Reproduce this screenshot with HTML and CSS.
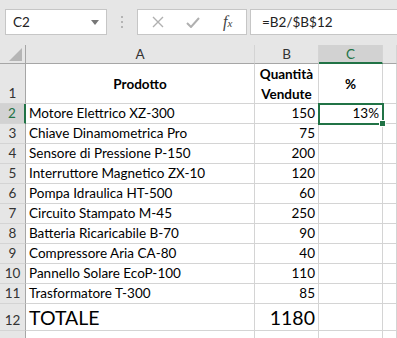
FILE: index.html
```html
<!DOCTYPE html>
<html lang="it">
<head>
    <meta charset="UTF-8">
    <meta name="viewport" content="width=device-width, initial-scale=1.0">
    <title>Foglio vendite</title>
    <link rel="stylesheet" href="styles.css">
</head>
<body>
    <div class="topbar">
        <div class="namebox">
            <span>C2</span>
            <svg class="caret" width="8" height="5" viewBox="0 0 8 5"><path d="M0 0h8L4 5z" fill="#777"/></svg>
        </div>
        <div class="grip">
            <svg width="3" height="13" viewBox="0 0 3 13"><rect x="0" y="0" width="2" height="2" fill="#b4b4b4"/><rect x="0" y="5" width="2" height="2" fill="#b4b4b4"/><rect x="0" y="10" width="2" height="2" fill="#b4b4b4"/></svg>
        </div>
        <div class="fxbox">
            <svg class="ico-x" width="12" height="12" viewBox="0 0 12 12"><path d="M1 1l10 10M11 1L1 11" stroke="#b0b0b0" stroke-width="1.4" fill="none"/></svg>
            <svg class="ico-ok" width="14" height="11" viewBox="0 0 14 11"><path d="M1 6l4 4L13 1" stroke="#b0b0b0" stroke-width="2" fill="none"/></svg>
            <span class="fx">f<small>x</small></span>
        </div>
        <div class="formula">=B2/$B$12</div>
    </div>

    <div class="sheet">
        <!-- header row -->
        <div class="hd corner"><svg width="13" height="13" viewBox="0 0 13 13"><path d="M13 0v13H0z" fill="#b5b5b5"/></svg></div>
        <div class="hd col">A</div>
        <div class="hd col">B</div>
        <div class="hd col sel">C</div>
        <div class="hd col"></div>

        <!-- row 1 -->
        <div class="rh">1</div>
        <div class="c title">Prodotto</div>
        <div class="c title">Quantità<br>Vendute</div>
        <div class="c title">%</div>
        <div class="c"></div>

        <div class="rh sel">2</div>
        <div class="c">Motore Elettrico XZ-300</div>
        <div class="c num">150</div>
        <div class="c num active">13%<span class="handle"></span></div>
        <div class="c"></div>

        <div class="rh">3</div>
        <div class="c">Chiave Dinamometrica Pro</div>
        <div class="c num">75</div>
        <div class="c"></div>
        <div class="c"></div>

        <div class="rh">4</div>
        <div class="c">Sensore di Pressione P-150</div>
        <div class="c num">200</div>
        <div class="c"></div>
        <div class="c"></div>

        <div class="rh">5</div>
        <div class="c">Interruttore Magnetico ZX-10</div>
        <div class="c num">120</div>
        <div class="c"></div>
        <div class="c"></div>

        <div class="rh">6</div>
        <div class="c">Pompa Idraulica HT-500</div>
        <div class="c num">60</div>
        <div class="c"></div>
        <div class="c"></div>

        <div class="rh">7</div>
        <div class="c">Circuito Stampato M-45</div>
        <div class="c num">250</div>
        <div class="c"></div>
        <div class="c"></div>

        <div class="rh">8</div>
        <div class="c">Batteria Ricaricabile B-70</div>
        <div class="c num">90</div>
        <div class="c"></div>
        <div class="c"></div>

        <div class="rh">9</div>
        <div class="c">Compressore Aria CA-80</div>
        <div class="c num">40</div>
        <div class="c"></div>
        <div class="c"></div>

        <div class="rh">10</div>
        <div class="c">Pannello Solare EcoP-100</div>
        <div class="c num">110</div>
        <div class="c"></div>
        <div class="c"></div>

        <div class="rh">11</div>
        <div class="c">Trasformatore T-300</div>
        <div class="c num">85</div>
        <div class="c"></div>
        <div class="c"></div>

        <div class="rh">12</div>
        <div class="c big">TOTALE</div>
        <div class="c num big">1180</div>
        <div class="c"></div>
        <div class="c"></div>

        <div class="rh"></div>
        <div class="c"></div>
        <div class="c"></div>
        <div class="c"></div>
        <div class="c"></div>
    </div>
</body>
</html>
```

FILE: styles.css
```css
body {
    margin: 0;
    background: #e6e6e6;
    font-family: Lato, 'Liberation Sans', sans-serif;
    font-size: 13.5px;
    color: #000;
    overflow: hidden;
}
.topbar {
    height: 45px;
    box-sizing: border-box;
    padding: 9px 0 0 5px;
    display: flex;
    align-items: flex-start;
}
.namebox {
    width: 102px;
    height: 26px;
    box-sizing: border-box;
    background: #fff;
    border: 1px solid #c6c6c6;
    display: flex;
    align-items: center;
    justify-content: space-between;
    padding: 0 7px 0 7px;
    color: #222;
}
.grip {
    width: 30px;
    height: 26px;
    display: flex;
    align-items: center;
    justify-content: center;
}
.fxbox {
    width: 110px;
    height: 26px;
    box-sizing: border-box;
    background: #fff;
    border: 1px solid #c6c6c6;
    display: flex;
    align-items: center;
    padding-left: 14px;
}
.ico-ok {
    margin-left: 22px;
}
.fx {
    margin-left: 23px;
    font-family: 'Liberation Serif', serif;
    font-style: italic;
    font-size: 16px;
    color: #444;
}
.fx small {
    font-size: 11px;
}
.formula {
    flex: 1;
    height: 26px;
    margin-left: 3px;
    margin-right: -5px;
    box-sizing: border-box;
    background: #fff;
    border: 1px solid #c6c6c6;
    padding-left: 11px;
    line-height: 24px;
    color: #222;
}
.sheet {
    display: grid;
    grid-template-columns: 26px 229px 64px 64px 1fr;
    grid-template-rows: 19px 40px repeat(10, 20px) 27px 20px;
    background: #fff;
}
.sheet > div {
    box-sizing: border-box;
    border-right: 1px solid #d4d4d4;
    border-bottom: 1px solid #d4d4d4;
    position: relative;
}
.hd {
    background: #e6e6e6;
    border-bottom-color: #a6a6a6 !important;
    display: flex;
    align-items: center;
    justify-content: center;
    color: #333;
}
.corner {
    border-right-color: #a6a6a6 !important;
    align-items: flex-end;
    justify-content: flex-end;
    padding: 0 3px 2px 0;
}
.hd.sel {
    background: #d2d2d2;
    color: #217346;
    border-bottom: 2px solid #217346 !important;
}
.rh {
    background: #e6e6e6;
    border-right-color: #a6a6a6 !important;
    display: flex;
    align-items: flex-end;
    justify-content: center;
    color: #333;
    line-height: 19px;
}
.rh.sel {
    background: #d2d2d2;
    color: #217346;
    border-right: 2px solid #217346 !important;
}
.c {
    display: flex;
    align-items: flex-end;
    padding: 0 3px;
    line-height: 19px;
    white-space: nowrap;
}
.title {
    font-weight: bold;
    align-items: center;
    justify-content: center;
    text-align: center;
    line-height: 20px;
    white-space: normal;
}
.num {
    justify-content: flex-end;
}
.big {
    font-size: 19.5px;
    line-height: 25px;
}
.active {
    outline: 2px solid #217346;
    outline-offset: -1px;
    z-index: 1;
}
.handle {
    position: absolute;
    right: -4px;
    bottom: -4px;
    width: 5px;
    height: 5px;
    background: #217346;
    border: 1px solid #fff;
}
```
